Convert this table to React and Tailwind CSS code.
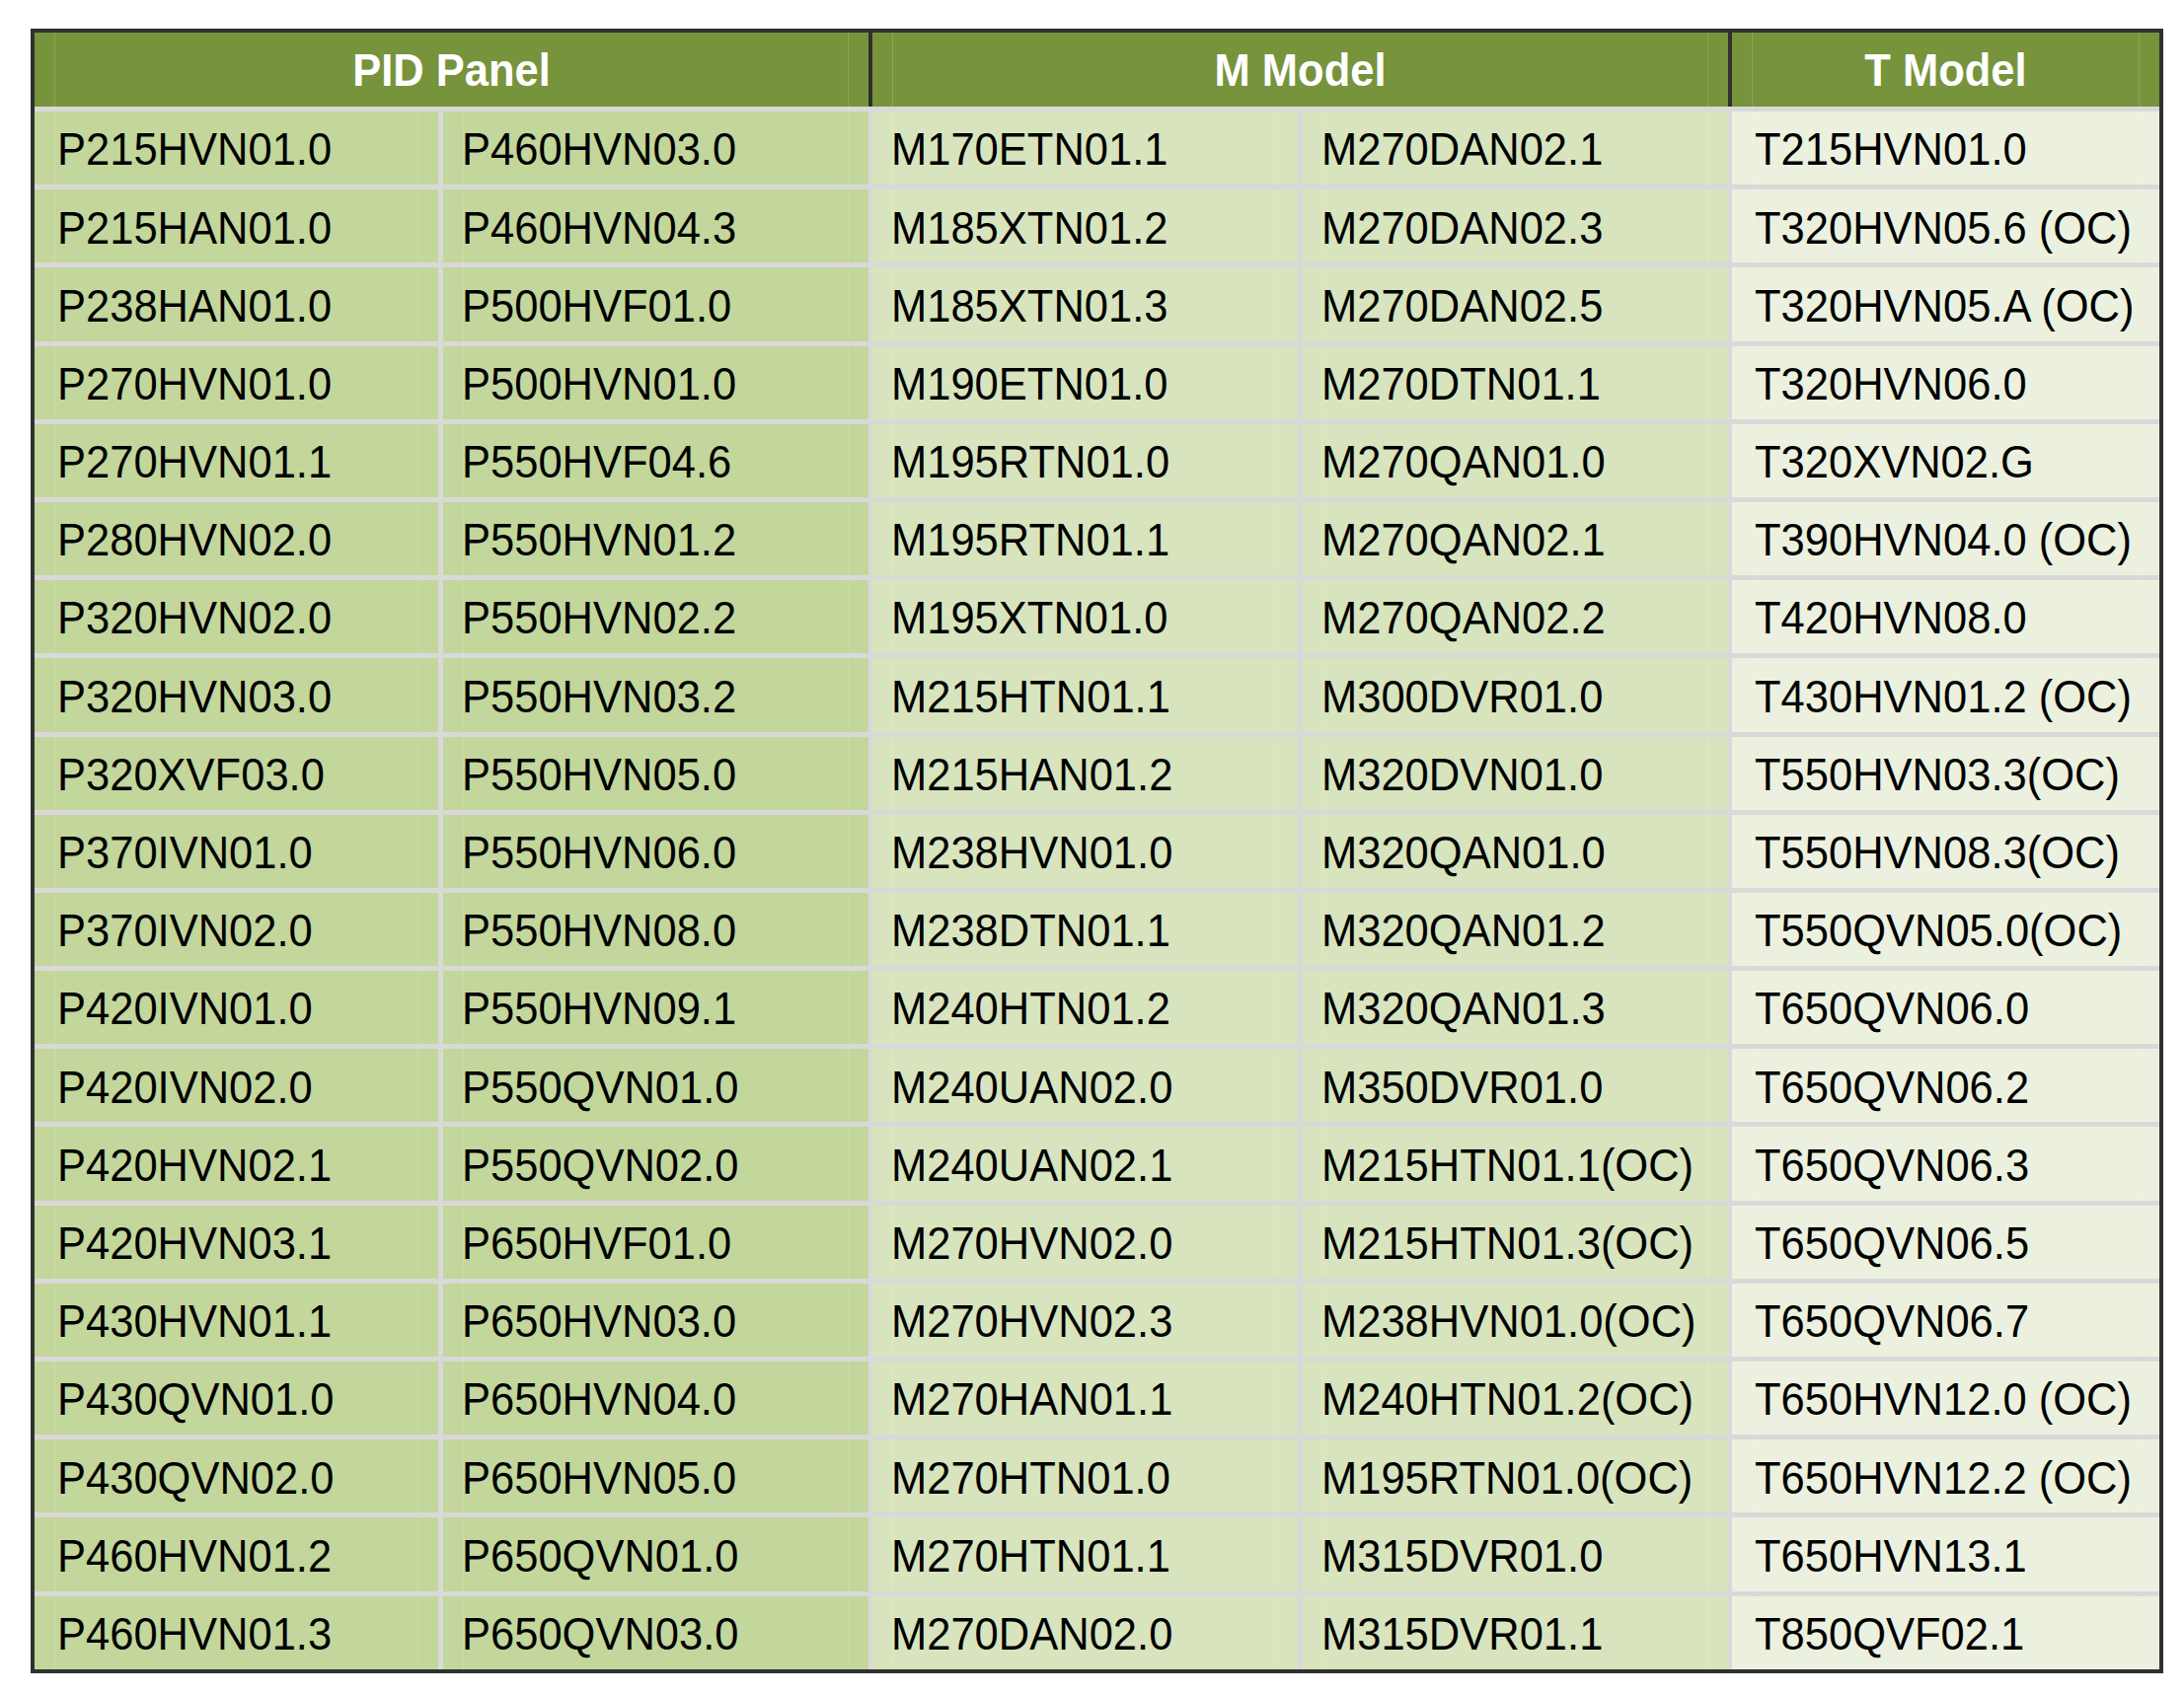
import React from 'react';

// Tabla de modelos compatibles: PID Panel / M Model / T Model
const PID_A = [
  'P215HVN01.0', 'P215HAN01.0', 'P238HAN01.0', 'P270HVN01.0', 'P270HVN01.1',
  'P280HVN02.0', 'P320HVN02.0', 'P320HVN03.0', 'P320XVF03.0', 'P370IVN01.0',
  'P370IVN02.0', 'P420IVN01.0', 'P420IVN02.0', 'P420HVN02.1', 'P420HVN03.1',
  'P430HVN01.1', 'P430QVN01.0', 'P430QVN02.0', 'P460HVN01.2', 'P460HVN01.3',
];
const PID_B = [
  'P460HVN03.0', 'P460HVN04.3', 'P500HVF01.0', 'P500HVN01.0', 'P550HVF04.6',
  'P550HVN01.2', 'P550HVN02.2', 'P550HVN03.2', 'P550HVN05.0', 'P550HVN06.0',
  'P550HVN08.0', 'P550HVN09.1', 'P550QVN01.0', 'P550QVN02.0', 'P650HVF01.0',
  'P650HVN03.0', 'P650HVN04.0', 'P650HVN05.0', 'P650QVN01.0', 'P650QVN03.0',
];
const M_A = [
  'M170ETN01.1', 'M185XTN01.2', 'M185XTN01.3', 'M190ETN01.0', 'M195RTN01.0',
  'M195RTN01.1', 'M195XTN01.0', 'M215HTN01.1', 'M215HAN01.2', 'M238HVN01.0',
  'M238DTN01.1', 'M240HTN01.2', 'M240UAN02.0', 'M240UAN02.1', 'M270HVN02.0',
  'M270HVN02.3', 'M270HAN01.1', 'M270HTN01.0', 'M270HTN01.1', 'M270DAN02.0',
];
const M_B = [
  'M270DAN02.1', 'M270DAN02.3', 'M270DAN02.5', 'M270DTN01.1', 'M270QAN01.0',
  'M270QAN02.1', 'M270QAN02.2', 'M300DVR01.0', 'M320DVN01.0', 'M320QAN01.0',
  'M320QAN01.2', 'M320QAN01.3', 'M350DVR01.0', 'M215HTN01.1(OC)', 'M215HTN01.3(OC)',
  'M238HVN01.0(OC)', 'M240HTN01.2(OC)', 'M195RTN01.0(OC)', 'M315DVR01.0', 'M315DVR01.1',
];
const T = [
  'T215HVN01.0', 'T320HVN05.6 (OC)', 'T320HVN05.A (OC)', 'T320HVN06.0', 'T320XVN02.G',
  'T390HVN04.0 (OC)', 'T420HVN08.0', 'T430HVN01.2 (OC)', 'T550HVN03.3(OC)', 'T550HVN08.3(OC)',
  'T550QVN05.0(OC)', 'T650QVN06.0', 'T650QVN06.2', 'T650QVN06.3', 'T650QVN06.5',
  'T650QVN06.7', 'T650HVN12.0 (OC)', 'T650HVN12.2 (OC)', 'T650HVN13.1', 'T850QVF02.1',
];

// Celda del cuerpo: margen de 20px con las líneas tenues de la cuadrícula
function Cell({ className, shift = 'ml-[2px]', children }) {
  return (
    <div className={`h-full ${className}`}>
      <div className="mx-[20px] h-full border-x border-white/15 flex items-center whitespace-nowrap">
        <span className={`inline-block translate-y-[2px] scale-y-[1.07] ${shift}`}>{children}</span>
      </div>
    </div>
  );
}

export default function App() {
  return (
    <div className="min-h-screen bg-white pt-[29px] pl-[31px] font-['Liberation_Sans',Arial,sans-serif]">
      <div className="w-[2161px] border-4 border-[#303030]">
        {/* Cabecera */}
        <div className="flex h-[75px] bg-[#77933c] text-white font-bold text-[43.5px] leading-none">
          <div className="w-[845px] h-full">
            <div className="mx-[20px] h-full border-x border-white/15 flex items-center justify-center">
              <span className="inline-block translate-y-[1px] scale-y-[1.05]">PID Panel</span>
            </div>
          </div>
          <div className="w-[871px] h-full border-l-4 border-[#303030]">
            <div className="mx-[20px] h-full border-x border-white/15 flex items-center justify-center">
              <span className="inline-block translate-y-[1px] scale-y-[1.05]">M Model</span>
            </div>
          </div>
          <div className="w-[437px] h-full border-l-4 border-[#303030]">
            <div className="mx-[20px] h-full border-x border-white/15 flex items-center justify-center">
              <span className="inline-block translate-y-[1px] scale-y-[1.05]">T Model</span>
            </div>
          </div>
        </div>

        {/* Filas */}
        {PID_A.map((p, i) => (
          <div key={p} className="flex h-[79.2px] border-t-[5px] border-[#d9d9d9] text-black text-[43.5px] leading-none">
            <Cell className="w-[409px] bg-[#c3d69b]">{p}</Cell>
            <Cell className="w-[436px] bg-[#c3d69b] border-l-[5px] border-[#d9d9d9]" shift="-ml-[2px]">{PID_B[i]}</Cell>
            <Cell className="w-[435px] bg-[#d7e4bd] border-l-4 border-[#d9d9d9]" shift="-ml-[2px]">{M_A[i]}</Cell>
            <Cell className="w-[436px] bg-[#d7e4bd] border-l-[5px] border-[#d9d9d9]" shift="-ml-[2px]">{M_B[i]}</Cell>
            <Cell className="w-[437px] bg-[#ebf1de] border-l-4 border-[#d9d9d9]">{T[i]}</Cell>
          </div>
        ))}
      </div>
    </div>
  );
}
